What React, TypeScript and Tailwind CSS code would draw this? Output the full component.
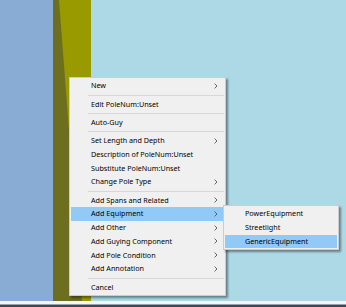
import React from "react";

type Item = { label: string; sub?: boolean; active?: boolean } | "sep";

const items: Item[] = [
  { label: "New", sub: true },
  "sep",
  { label: "Edit PoleNum:Unset" },
  "sep",
  { label: "Auto-Guy" },
  "sep",
  { label: "Set Length and Depth", sub: true },
  { label: "Description of PoleNum:Unset" },
  { label: "Substitute PoleNum:Unset" },
  { label: "Change Pole Type", sub: true },
  "sep",
  { label: "Add Spans and Related", sub: true },
  { label: "Add Equipment", sub: true, active: true },
  { label: "Add Other", sub: true },
  { label: "Add Guying Component", sub: true },
  { label: "Add Pole Condition", sub: true },
  { label: "Add Annotation", sub: true },
  "sep",
  { label: "Cancel" },
];

const equipment = [
  { label: "PowerEquipment" },
  { label: "Streetlight" },
  { label: "GenericEquipment", active: true },
];

function Chevron() {
  return (
    <svg width="4" height="6" viewBox="0 0 4 6" className="shrink-0">
      <path d="M0.6 0.6 L3 3 L0.6 5.4" fill="none" stroke="#555" strokeWidth="0.9" />
    </svg>
  );
}

function MenuRow({ label, sub, active }: { label: string; sub?: boolean; active?: boolean }) {
  return (
    <div
      className={`flex h-[13.75px] items-center pl-[20px] pr-[6px] leading-none ${
        active ? "bg-[#91c9f7]" : ""
      }`}
    >
      <span className="flex-1 whitespace-nowrap">{label}</span>
      {sub && <Chevron />}
    </div>
  );
}

export default function App() {
  return (
    <div className="relative h-[307px] w-[346px] overflow-hidden font-['Noto_Sans',sans-serif] text-[7.2px] text-black">
      {/* drawing canvas */}
      <div className="flex h-[301px]">
        <div className="w-[53px] bg-[#89acd5]" />
        <div className="w-[38px] bg-[#999900]">
          <svg width="38" height="301" viewBox="0 0 38 301">
            <polygon points="0,0 6,0 29,301 0,301" fill="#6e6e20" />
          </svg>
        </div>
        <div className="flex-1 bg-[#add8e6]" />
      </div>
      <div className="h-[3px] bg-[#f3f5f7]" />
      <div className="h-px bg-[#9aa3ad]" />
      <div className="h-[2px] bg-[#3b4757]" />

      {/* context menu */}
      <div className="absolute left-[69px] top-[77px] w-[157px] border border-[#cccccc] bg-[#f0f0f0] p-px shadow-[2px_2px_2px_rgba(0,0,0,0.4)]">
        {items.map((it, i) =>
          it === "sep" ? (
            <div key={i} className="ml-[17px] my-[1.75px] h-px bg-[#d7d7d7]" />
          ) : (
            <MenuRow key={i} {...it} />
          )
        )}
      </div>

      {/* submenu */}
      <div className="absolute left-[223px] top-[205px] w-[116px] border border-[#cccccc] bg-[#f0f0f0] p-px shadow-[2px_2px_2px_rgba(0,0,0,0.4)]">
        {equipment.map((it) => (
          <MenuRow key={it.label} {...it} />
        ))}
      </div>
    </div>
  );
}
